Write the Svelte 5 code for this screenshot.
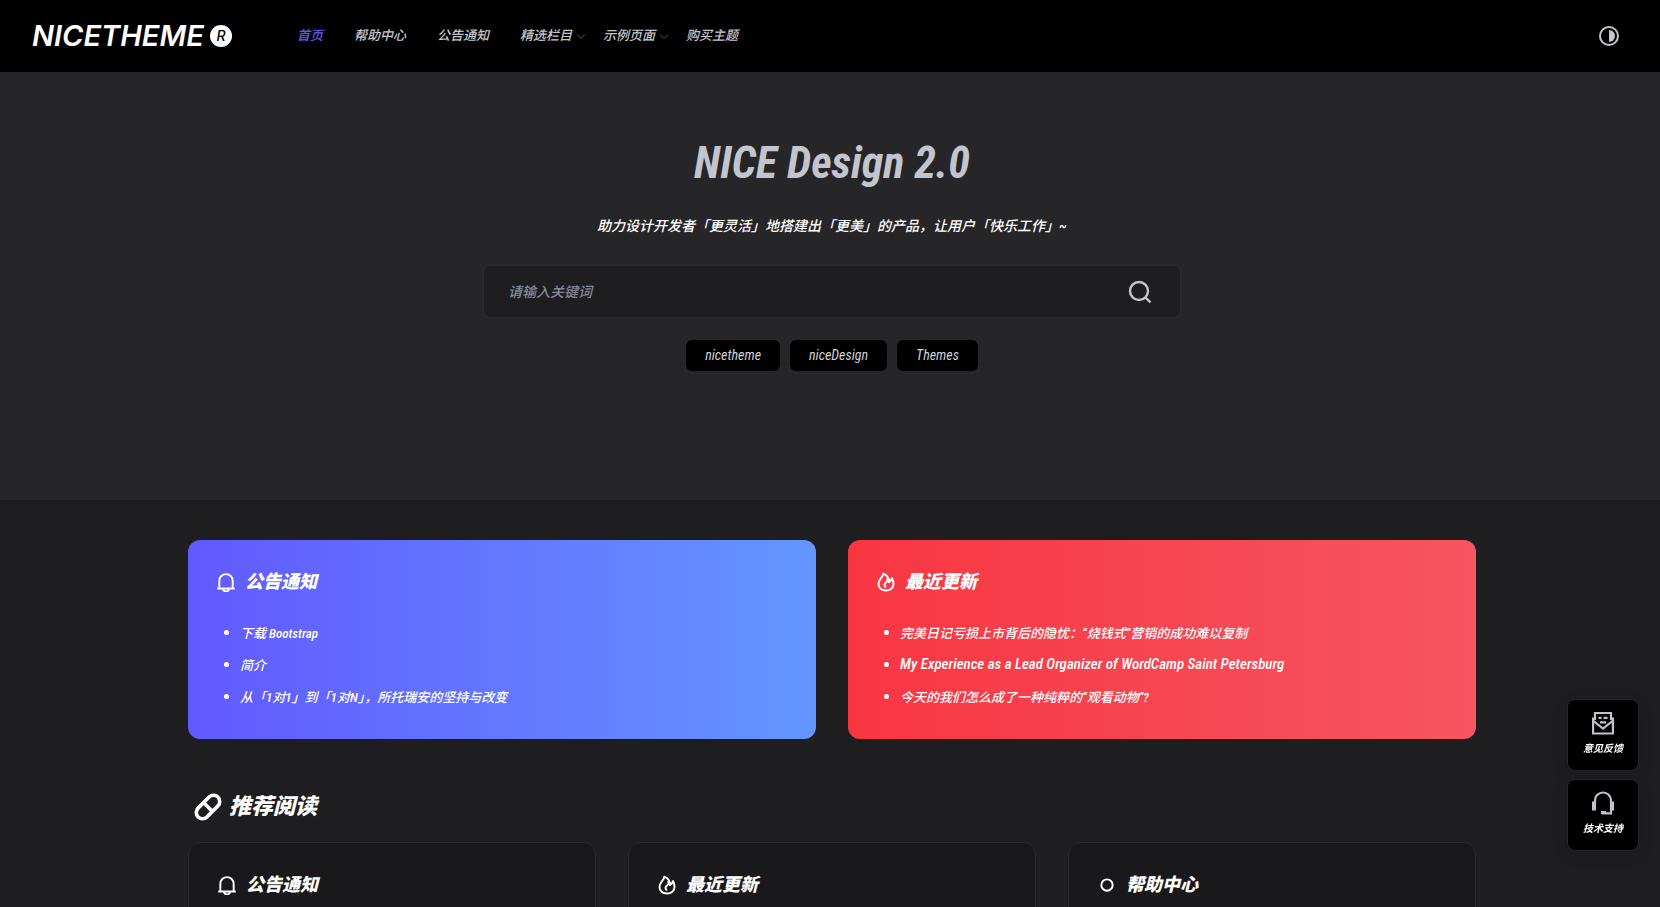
<script>
  const navItems = [
    { label: '首页', active: true },
    { label: '帮助中心' },
    { label: '公告通知' },
    { label: '精选栏目', children: true },
    { label: '示例页面', children: true },
    { label: '购买主题' }
  ];

  const tags = ['nicetheme', 'niceDesign', 'Themes'];

  const banners = [
    {
      title: '公告通知',
      icon: 'bell',
      tone: 'blue',
      posts: ['下载 Bootstrap', '简介', '从「1对1」到「1对N」，所托瑞安的坚持与改变']
    },
    {
      title: '最近更新',
      icon: 'fire',
      tone: 'red',
      posts: [
        '完美日记亏损上市背后的隐忧：“烧钱式”营销的成功难以复制',
        'My Experience as a Lead Organizer of WordCamp Saint Petersburg',
        '今天的我们怎么成了一种纯粹的“观看动物”?'
      ]
    }
  ];

  const reading = [
    { title: '公告通知', icon: 'bell' },
    { title: '最近更新', icon: 'fire' },
    { title: '帮助中心', icon: 'circle' }
  ];

  let keyword = '';

  // Titles without any Chinese get the larger latin size
  function isLatin(text) {
    return /^[\x20-\x7e]+$/.test(text);
  }
</script>

{#snippet icon(name)}
  <svg class="icon" viewBox="0 0 24 24" fill="none" stroke="currentColor" stroke-width="2.3" aria-hidden="true">
    {#if name === 'bell'}
      <path d="M4 20V10.5a8 8 0 0 1 16 0V20M1.5 19.8h21" />
      <path d="M8.6 20a3.4 3.2 0 0 0 6.8 0" />
    {:else if name === 'fire'}
      <path stroke-linejoin="round" d="M8.6 2C9 6 3 8.500 3 14.500c0 4.700 3.800 7.700 9 7.700s9-3.300 9-7.700c0-3-.6-5-1.800-7.300-.6 2.200-1.400 3.800-3.600 5C15.800 8 13.500 3.800 8.600 2Z" />
      <path stroke-linecap="round" d="M15.600 12c-.6-1.300-1-2-1.800-2.600.4 3.200-3.600 3.200-3.600 6.200 0 1 .4 1.700 1.200 2.200" />
    {:else}
      <circle cx="12" cy="12" r="6.8" />
    {/if}
  </svg>
{/snippet}

<div class="page">
  <header class="header">
    <a class="logo" href="#home" aria-label="NICETHEME">
      <span class="wordmark">NICETHEME</span>
      <span class="badge">R</span>
    </a>
    <nav class="nav">
      {#each navItems as item}
        <a href="#nav" class:active={item.active}>
          {item.label}
          {#if item.children}
            <svg class="chevron" viewBox="0 0 10 6" fill="none" stroke="currentColor" aria-hidden="true">
              <path d="M1 .5l4 4 4-4" />
            </svg>
          {/if}
        </a>
      {/each}
    </nav>
    <button class="theme" type="button" aria-label="切换主题">
      <svg viewBox="0 0 22 22" aria-hidden="true">
        <circle cx="11" cy="11" r="9" fill="none" stroke="currentColor" stroke-width="2" />
        <path d="M11 5a6 6 0 0 1 0 12z" fill="currentColor" />
      </svg>
    </button>
  </header>

  <section class="hero">
    <h1>NICE Design 2.0</h1>
    <p>助力设计开发者「更灵活」地搭建出「更美」的产品，让用户「快乐工作」~</p>
    <form class="search" on:submit|preventDefault>
      <input type="text" placeholder="请输入关键词" aria-label="请输入关键词" bind:value={keyword} />
      <button type="submit" aria-label="搜索">
        <svg viewBox="0 0 24 24" fill="none" stroke="currentColor" stroke-width="2.4" aria-hidden="true">
          <circle cx="11" cy="11" r="9" />
          <path d="M17.3 17.3l5.2 5.2" />
        </svg>
      </button>
    </form>
    <div class="tags">
      {#each tags as tag}
        <a href="#tag">{tag}</a>
      {/each}
    </div>
  </section>

  <main class="content">
    <div class="banners">
      {#each banners as banner}
        <section class="banner {banner.tone}">
          <h3>{@render icon(banner.icon)}{banner.title}</h3>
          <ul>
            {#each banner.posts as post}
              <li><a href="#post" class:latin={isLatin(post)}>{post}</a></li>
            {/each}
          </ul>
        </section>
      {/each}
    </div>

    <h2>
      <svg viewBox="0 0 28 28" fill="none" stroke="currentColor" stroke-width="3.6" aria-hidden="true">
        <rect x="0" y="7.8" width="28" height="12.4" rx="6.2" transform="rotate(-45 14 14)" />
        <path d="M9.8 9.8l8.4 8.4" />
      </svg>
      推荐阅读
    </h2>

    <div class="cards">
      {#each reading as card}
        <section class="card">
          <h3>{@render icon(card.icon)}{card.title}</h3>
        </section>
      {/each}
    </div>
  </main>

  <aside class="float">
    <a href="#feedback">
      <svg viewBox="0 0 24 24" fill="none" stroke="currentColor" stroke-width="2.2" aria-hidden="true">
        <path d="M4 9V2h16v7" />
        <path d="M4 7.5H2.1V22.5h19.8V7.5H20" />
        <path d="M2.5 10l9.5 7.5 9.5-7.5" />
        <path d="M7.5 6.8h3M12.5 6.8h4M9 11.3h6" />
      </svg>
      意见反馈
    </a>
    <a href="#support">
      <svg viewBox="0 0 24 24" fill="none" stroke="currentColor" stroke-width="2.2" aria-hidden="true">
        <path d="M4 13v-3.5a8 8 0 0 1 16 0V13" />
        <path d="M20 18v4.3h-9" />
        <path stroke-width="4" d="M3 10.5v9M21 10.5v9" />
        <path stroke-width="3" d="M10 21.5h5" />
      </svg>
      技术支持
    </a>
  </aside>
</div>

<style>
  :global(body) {
    margin: 0;
    background: #1e1e20;
  }

  .page {
    height: 100vh;
    overflow: hidden;
    color: #fff;
    font-family: 'Roboto Condensed', Roboto, 'Noto Sans CJK SC', sans-serif;
    font-size: 13px;
    font-style: italic;
    font-weight: 500;
  }

  a {
    color: inherit;
    text-decoration: none;
  }

  h1, h2, h3, p, ul {
    margin: 0;
    padding: 0;
  }

  button {
    padding: 0;
    border: 0;
    background: none;
    color: #c4c6cc;
    cursor: pointer;
  }

  svg {
    display: block;
    flex-shrink: 0;
  }

  .header {
    display: flex;
    align-items: center;
    height: 72px;
    padding: 0 40px 0 32px;
    background: #000;
  }

  .logo {
    display: flex;
    align-items: center;
    gap: 6px;
    width: 265px;
    font-family: Inter, sans-serif;
  }

  .wordmark {
    font-size: 29px;
    font-weight: 600;
    line-height: 32px;
  }

  .badge {
    width: 22px;
    border-radius: 50%;
    background: #fff;
    color: #000;
    font-size: 14px;
    font-weight: 500;
    line-height: 22px;
    text-align: center;
  }

  .nav {
    display: flex;
    flex: 1;
    gap: 31px;
    color: #c4c6cc;
    line-height: 24px;
  }

  .nav a {
    position: relative;
    white-space: nowrap;
  }

  .nav .active {
    color: #5c5cff;
  }

  /* sits in the gap, so it does not push the next item */
  .chevron {
    position: absolute;
    top: 10px;
    left: 100%;
    width: 10px;
    margin-left: 4px;
    color: #55565a;
  }

  .theme svg {
    width: 22px;
  }

  .hero {
    display: flex;
    flex-direction: column;
    align-items: center;
    box-sizing: border-box;
    height: 428px;
    padding: 56px 0 0 4px;
    background: #262628;
  }

  h1 {
    color: #c2c5cd;
    font-size: 44px;
    font-weight: 700;
    line-height: 70px;
  }

  .hero p {
    margin-top: 14px;
    font-size: 14px;
    line-height: 28px;
  }

  .search {
    display: flex;
    align-items: center;
    box-sizing: border-box;
    width: 80%;
    max-width: 700px;
    height: 55px;
    margin-top: 24px;
    padding: 0 28px 0 24px;
    border: 2px solid #29292c;
    border-radius: 8px;
    background: #1e1e20;
  }

  .search input {
    flex: 1;
    min-width: 0;
    padding: 0;
    border: 0;
    outline: 0;
    background: none;
    color: #fff;
    font: inherit;
    font-size: 14px;
  }

  .search input::placeholder {
    color: #858997;
    opacity: 1;
  }

  .search svg {
    width: 24px;
  }

  .tags {
    display: flex;
    gap: 10px;
    margin-top: 21px;
  }

  .tags a {
    padding: 0 19px;
    border-radius: 6px;
    background: #000;
    color: #d0d2d8;
    font-size: 14px;
    font-weight: 400;
    line-height: 31px;
  }

  .content {
    max-width: 1288px;
    margin: 0 auto;
    padding: 40px 0 0 4px;
  }

  .banners,
  .cards {
    display: grid;
    grid-template-columns: repeat(2, 1fr);
    gap: 32px;
  }

  .cards {
    grid-template-columns: repeat(3, 1fr);
  }

  .banner {
    padding: 26px 28px;
    border-radius: 12px;
  }

  .blue {
    background: linear-gradient(90deg, #6259ff, #6496ff);
  }

  .red {
    background: linear-gradient(90deg, #f83642, #f65561);
  }

  h3 {
    display: flex;
    align-items: center;
    gap: 9px;
    font-size: 18px;
    font-weight: 900;
    line-height: 32px;
  }

  .icon {
    width: 20px;
  }

  .banner ul {
    margin: 18px 0 1px;
    padding-left: 8px;
    list-style: none;
  }

  .banner li {
    display: flex;
    align-items: center;
    gap: 11px;
    height: 32px;
  }

  .banner li::before {
    content: '';
    width: 5px;
    height: 5px;
    border-radius: 50%;
    background: #fff;
  }

  .banner .latin {
    font-size: 15px;
  }

  h2 {
    display: flex;
    align-items: center;
    gap: 7px;
    margin: 50px 0 17px;
    padding-left: 6px;
    font-size: 22px;
    font-weight: 900;
    line-height: 36px;
  }

  h2 svg {
    width: 28px;
  }

  .card {
    padding: 26px 28px 180px;
    border: 1px solid #2a2a2c;
    border-radius: 12px;
    background: #19191b;
  }

  .float {
    position: fixed;
    right: 21px;
    bottom: 56px;
    display: grid;
    gap: 8px;
  }

  .float a {
    display: flex;
    flex-direction: column;
    align-items: center;
    gap: 4px;
    box-sizing: border-box;
    width: 72px;
    height: 72px;
    padding-top: 11px;
    border: 1px solid #262628;
    border-radius: 8px;
    background: #000;
    box-shadow: 0 4px 16px rgba(0, 0, 0, 0.1);
    font-size: 10px;
    font-weight: 700;
    line-height: 20px;
  }

  .float svg {
    width: 24px;
    color: #c0c2ca;
  }
</style>
